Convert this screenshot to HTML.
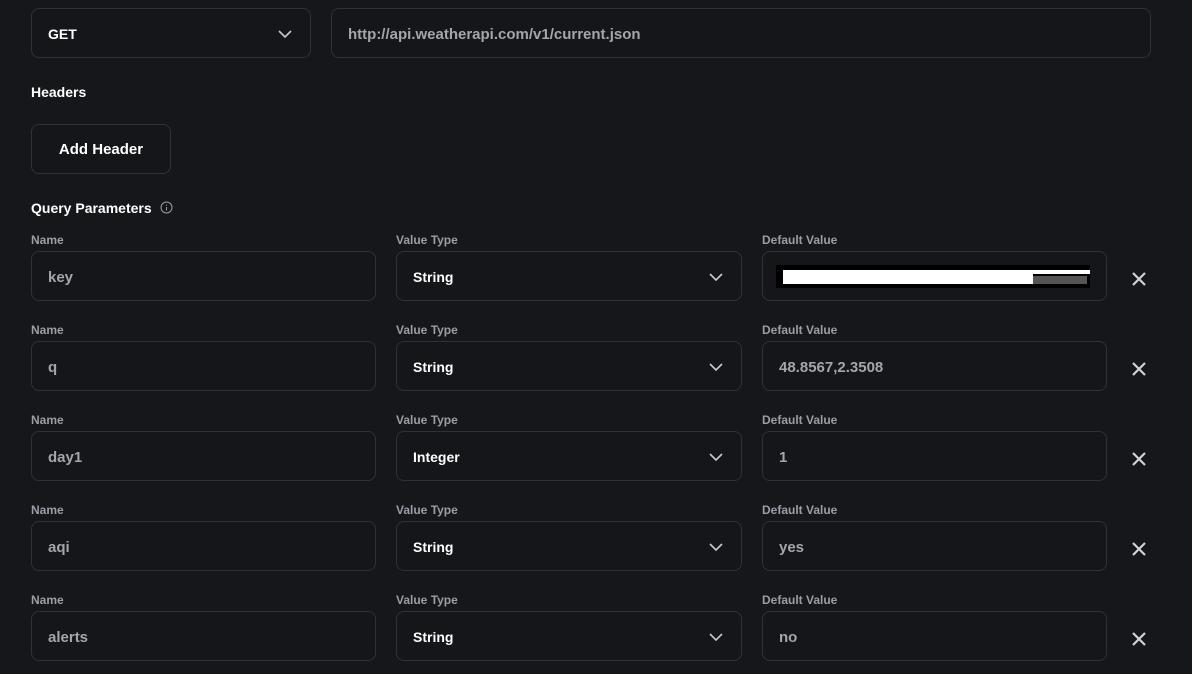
<!DOCTYPE html>
<html><head><style>
*{box-sizing:border-box;margin:0;padding:0}
body{width:1192px;height:674px;background:#15171a;font-family:"Liberation Sans",sans-serif;position:relative;overflow:hidden;color:#fff}
.box{position:absolute;height:50px;border:1px solid #2e3238;border-radius:8px;background:#141619;display:flex;align-items:center;padding-left:16px;padding-top:2px;font-size:15px}
.t{position:absolute;font-weight:bold;font-size:14px;color:#fff}
.l{position:absolute;font-size:12px;font-weight:bold;color:#9a9ea6}
.g{color:#a2a6ad;font-weight:bold}
.w{color:#fff;font-weight:bold;font-size:14px}
.chev{position:absolute;right:18px;top:20px}
.x{position:absolute;width:18px;height:18px}
</style></head><body>
<div class="box" style="left:31px;top:8px;width:280px;"><span class="w">GET</span><svg class="chev" width="14" height="10" viewBox="0 0 14 10"><path d="M1 2l6 6 6-6" stroke="#c8ccd2" stroke-width="1.6" fill="none"/></svg></div>
<div class="box" style="left:331px;top:8px;width:820px;"><span class="g">http://api.weatherapi.com/v1/current.json</span></div>
<div class="t" style="left:31px;top:84px;">Headers</div>
<div class="box" style="left:31px;top:124px;width:140px;justify-content:center;padding:0"><span class="w" style="font-size:15px">Add Header</span></div>
<div class="t" style="left:31px;top:200px;">Query Parameters <svg width="13" height="13" viewBox="0 0 13 13" style="margin-left:4px;vertical-align:-1px"><circle cx="6.5" cy="6.5" r="5.5" stroke="#9a9ea6" fill="none"/><path d="M6.5 6v3.5M6.5 3.6v1" stroke="#9a9ea6"/></svg></div>

<div id="rows"></div>
<script>
var rows=[["key","String",""],["q","String","48.8567,2.3508"],["day1","Integer","1"],["aqi","String","yes"],["alerts","String","no"]];
var h="";
rows.forEach(function(r,i){var y=233+i*90;
h+='<div class="l" style="left:31px;top:'+y+'px">Name</div><div class="l" style="left:396px;top:'+y+'px">Value Type</div><div class="l" style="left:762px;top:'+y+'px">Default Value</div>';
h+='<div class="box" style="left:31px;top:'+(y+18)+'px;width:345px"><span class="g">'+r[0]+'</span></div>';
h+='<div class="box" style="left:396px;top:'+(y+18)+'px;width:346px"><span class="w">'+r[1]+'</span><svg class="chev" width="14" height="10" viewBox="0 0 14 10"><path d="M1 2l6 6 6-6" stroke="#c8ccd2" stroke-width="1.6" fill="none"/></svg></div>';
h+='<div class="box" style="left:762px;top:'+(y+18)+'px;width:345px"><span class="g">'+r[2]+'</span></div>';
h+='<svg class="x" style="left:1130px;top:'+(y+37)+'px" viewBox="0 0 18 18"><path d="M3 3l12 12M15 3L3 15" stroke="#d0d3d8" stroke-width="2.2"/></svg>';
});
document.getElementById("rows").innerHTML=h;
</script>
<div style="position:absolute;left:776px;top:265px;width:314px;height:23px;background:#000"></div>
<div style="position:absolute;left:783px;top:270px;width:250px;height:14px;background:#fff"></div>
<div style="position:absolute;left:1033px;top:270px;width:57px;height:4px;background:#fff"></div>
<div style="position:absolute;left:1033px;top:276px;width:54px;height:8px;background:#555"></div>
</body></html>
